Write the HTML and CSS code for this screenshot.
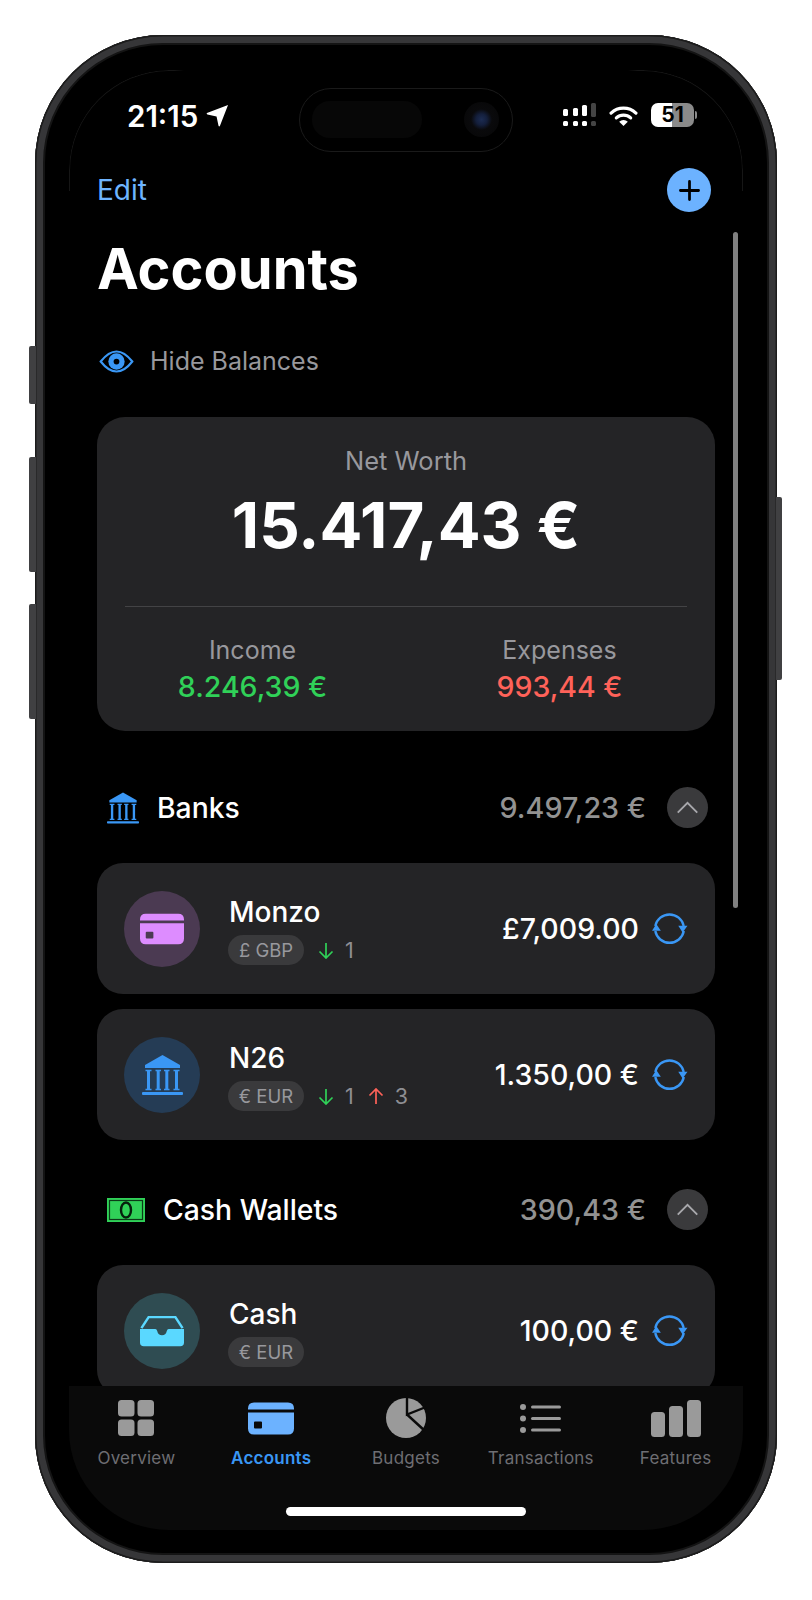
FILE: index.html
```html
<!DOCTYPE html>
<html lang="en">

<head>
  <meta charset="UTF-8">
  <meta name="viewport" content="width=device-width, initial-scale=1.0">
  <title>Accounts</title>
  <link rel="stylesheet" href="styles.css">
</head>

<body>
  <svg class="icon-defs" width="0" height="0">
    <defs>
      <symbol id="bank" viewBox="0 0 41 40">
        <path d="M20.500 0 L38 10 V13 H3 V10 Z" fill="currentColor" />
        <path d="M3.500 15.500 H9.500 M13.500 15.500 H19 M22 15.500 H27.500 M31.500 15.500 H37.500 M3.500 34.500 H9.500 M13.500 34.500 H19 M22 34.500 H27.500 M31.500 34.500 H37.500" stroke="currentColor" stroke-width="1.600" />
        <path d="M6.500 15.500 V34.500 M16.200 15.500 V34.500 M24.800 15.500 V34.500 M34.500 15.500 V34.500" stroke="currentColor" stroke-width="3" />
        <rect x="0" y="37" width="41" height="3" rx="1" fill="currentColor" />
      </symbol>
      <symbol id="sync" viewBox="0 0 36 32">
        <path d="M3.300 13 A14.500 14.500 0 0 1 31.700 13 M31.800 18 A14.500 14.500 0 0 1 3.300 18" fill="none" stroke="currentColor" stroke-width="2.400" />
        <path d="M26.300 12.700 H35.500 L30.600 19.500 Z" fill="currentColor" />
        <path d="M0 17.700 H8.800 L4.300 11 Z" fill="currentColor" />
      </symbol>
      <symbol id="card" viewBox="0 0 46 32">
        <path d="M0 6 Q0 0 6 0 H40 Q46 0 46 6 V7 H0 Z" fill="currentColor" />
        <path d="M0 10 H46 V26 Q46 32 40 32 H6 Q0 32 0 26 Z M7 19 Q6 19 6 20 V25 Q6 26 7 26 H13 Q14 26 14 25 V20 Q14 19 13 19 Z" fill="currentColor" fill-rule="evenodd" />
      </symbol>
      <symbol id="chevron" viewBox="0 0 24 14">
        <path d="M1.500 12.500 L12 2 L22.500 12.500" fill="none" stroke="currentColor" stroke-width="2" />
      </symbol>
      <symbol id="arrow-down" viewBox="0 0 16 17">
        <path d="M8 1 V16 M1.500 9.500 L8 16 L14.500 9.500" fill="none" stroke="currentColor" stroke-width="1.700" />
      </symbol>
      <symbol id="arrow-up" viewBox="0 0 16 17">
        <path d="M8 16 V1 M1.500 7.500 L8 1 L14.500 7.500" fill="none" stroke="currentColor" stroke-width="1.700" />
      </symbol>
    </defs>
  </svg>

  <div class="phone">
    <div class="side-button side-mute"></div>
    <div class="side-button side-up"></div>
    <div class="side-button side-down"></div>
    <div class="side-button side-power"></div>

    <div class="screen">
      <div class="status-bar">
        <div class="status-left">
          <span class="status-time">21:15</span>
          <svg class="status-location" viewBox="0 0 24 24">
            <path d="M23 1 L14.500 23 Q13.500 24 13 22.500 L11 13 L1.500 11 Q0 10.500 1 9.500 Z" fill="#fff" />
          </svg>
        </div>
        <div class="status-right">
          <svg class="status-signal" viewBox="0 0 33 24">
            <rect x="0" y="6" width="5" height="7" rx="1.500" fill="#fff" />
            <rect x="0" y="18" width="5" height="5" rx="1.500" fill="#fff" />
            <rect x="10" y="5" width="5" height="8" rx="1.500" fill="#fff" />
            <rect x="10" y="18" width="5" height="5" rx="1.500" fill="#fff" />
            <rect x="19" y="2" width="5" height="11" rx="1.500" fill="#fff" />
            <rect x="19" y="18" width="5" height="5" rx="1.500" fill="#fff" />
            <rect x="28" y="0" width="5" height="14" rx="1.500" fill="#444" />
            <rect x="28" y="18" width="5" height="5" rx="1.500" fill="#444" />
          </svg>
          <svg class="status-wifi" viewBox="0 0 30 22">
            <path d="M2 8.500 A19 19 0 0 1 28 8.500" fill="none" stroke="#fff" stroke-width="3.400" stroke-linecap="round" />
            <path d="M7.500 13.500 A11 11 0 0 1 22.500 13.500" fill="none" stroke="#fff" stroke-width="3.400" stroke-linecap="round" />
            <path d="M15 22 L10.500 17.500 A6.500 6.500 0 0 1 19.500 17.500 Z" fill="#fff" />
          </svg>
          <div class="battery">
            <div class="battery-body">
              <span class="battery-text">51</span>
            </div>
            <div class="battery-tip"></div>
          </div>
        </div>
        <div class="island">
          <div class="island-sensor"></div>
          <div class="island-camera"></div>
        </div>
      </div>

      <div class="content">
        <div class="scrollbar"></div>

        <div class="top-row">
          <span class="edit-link">Edit</span>
          <div class="add-button">
            <svg viewBox="0 0 22 22" width="21" height="21">
              <path d="M11 1.500 V20.500 M1.500 11 H20.500" stroke="#000" stroke-width="2.900" stroke-linecap="round" />
            </svg>
          </div>
        </div>

        <h1 class="page-title">Accounts</h1>

        <div class="hide-row">
          <svg class="eye-icon" viewBox="0 0 36 24">
            <path d="M1.500 12 Q18 -9 34.500 12 Q18 33 1.500 12 Z" fill="none" stroke="#3a97f5" stroke-width="2.200" />
            <circle cx="18" cy="12" r="8.500" fill="#3a97f5" />
            <circle cx="18" cy="12" r="3" fill="#000" />
          </svg>
          <span>Hide Balances</span>
        </div>

        <div class="net-card">
          <div class="net-label">Net Worth</div>
          <div class="net-value">15.417,43 €</div>
          <div class="net-divider"></div>
          <div class="net-split">
            <div class="net-col">
              <div class="net-sub">Income</div>
              <div class="net-amount green">8.246,39 €</div>
            </div>
            <div class="net-col">
              <div class="net-sub">Expenses</div>
              <div class="net-amount red">993,44 €</div>
            </div>
          </div>
        </div>

        <div class="group-header">
          <svg class="group-icon-bank"><use href="#bank" /></svg>
          <span class="group-name">Banks</span>
          <span class="group-total">9.497,23 €</span>
          <div class="collapse-button"><svg><use href="#chevron" /></svg></div>
        </div>

        <div class="account-list">
          <div class="account-card">
            <div class="account-avatar avatar-purple"><svg class="avatar-card"><use href="#card" /></svg></div>
            <div class="account-info">
              <div class="account-name">Monzo</div>
              <div class="account-meta">
                <span class="chip">£ GBP</span>
                <span class="count"><svg class="green"><use href="#arrow-down" /></svg>1</span>
              </div>
            </div>
            <span class="account-balance">£7,009.00</span>
            <svg class="sync-icon"><use href="#sync" /></svg>
          </div>

          <div class="account-card">
            <div class="account-avatar avatar-blue"><svg class="avatar-bank"><use href="#bank" /></svg></div>
            <div class="account-info">
              <div class="account-name">N26</div>
              <div class="account-meta">
                <span class="chip">€ EUR</span>
                <span class="count"><svg class="green"><use href="#arrow-down" /></svg>1</span>
                <span class="count"><svg class="red"><use href="#arrow-up" /></svg>3</span>
              </div>
            </div>
            <span class="account-balance">1.350,00 €</span>
            <svg class="sync-icon"><use href="#sync" /></svg>
          </div>
        </div>

        <div class="group-header group-cash">
          <svg class="group-icon-cash" viewBox="0 0 38 24">
            <rect x="0" y="0" width="38" height="24" fill="#30d158" />
            <rect x="2.500" y="2.500" width="33" height="19" fill="none" stroke="#0c3a18" stroke-width="1.200" />
            <ellipse cx="19" cy="12" rx="5" ry="7.500" fill="#30d158" stroke="#06200d" stroke-width="2.400" />
          </svg>
          <span class="group-name">Cash Wallets</span>
          <span class="group-total">390,43 €</span>
          <div class="collapse-button"><svg><use href="#chevron" /></svg></div>
        </div>

        <div class="account-list">
          <div class="account-card">
            <div class="account-avatar avatar-teal">
              <svg class="avatar-card" viewBox="0 0 46 32">
                <path d="M1.500 13 L9 1.500 H37 L44.500 13" fill="none" stroke="#5ad8ff" stroke-width="2.600" />
                <path d="M0 14 H16 Q17.500 14 18 16 Q19 20.500 23 20.500 Q27 20.500 28 16 Q28.500 14 30 14 H46 V28 Q46 32 42 32 H4 Q0 32 0 28 Z" fill="#5ad8ff" />
              </svg>
            </div>
            <div class="account-info">
              <div class="account-name">Cash</div>
              <div class="account-meta">
                <span class="chip">€ EUR</span>
              </div>
            </div>
            <span class="account-balance">100,00 €</span>
            <svg class="sync-icon"><use href="#sync" /></svg>
          </div>
        </div>
      </div>

      <div class="tab-bar">
        <div class="tab-row">
          <div class="tab-item">
            <div class="tab-icon">
              <svg viewBox="0 0 36 36" width="36" height="36">
                <rect x="0" y="0" width="16.500" height="16.500" rx="3.500" fill="currentColor" />
                <rect x="19.500" y="0" width="16.500" height="16.500" rx="3.500" fill="currentColor" />
                <rect x="0" y="19.500" width="16.500" height="16.500" rx="3.500" fill="currentColor" />
                <rect x="19.500" y="19.500" width="16.500" height="16.500" rx="3.500" fill="currentColor" />
              </svg>
            </div>
            <span class="tab-label">Overview</span>
          </div>
          <div class="tab-item active">
            <div class="tab-icon">
              <svg width="46" height="33"><use href="#card" /></svg>
            </div>
            <span class="tab-label">Accounts</span>
          </div>
          <div class="tab-item">
            <div class="tab-icon">
              <svg viewBox="0 0 42 42" width="42" height="42">
                <circle cx="21" cy="21" r="20" fill="currentColor" />
                <path d="M22 0 V17.500 L41 10 M22 17.500 L40 34" fill="none" stroke="#0a0a0a" stroke-width="2.400" />
              </svg>
            </div>
            <span class="tab-label">Budgets</span>
          </div>
          <div class="tab-item">
            <div class="tab-icon">
              <svg viewBox="0 0 41 29" width="41" height="29">
                <circle cx="3" cy="3" r="3" fill="currentColor" />
                <circle cx="3" cy="14.500" r="3" fill="currentColor" />
                <circle cx="3" cy="26" r="3" fill="currentColor" />
                <rect x="11" y="1.500" width="30" height="3" rx="1.500" fill="currentColor" />
                <rect x="11" y="13" width="30" height="3" rx="1.500" fill="currentColor" />
                <rect x="11" y="24.500" width="30" height="3" rx="1.500" fill="currentColor" />
              </svg>
            </div>
            <span class="tab-label">Transactions</span>
          </div>
          <div class="tab-item">
            <div class="tab-icon">
              <svg viewBox="0 0 50 37" width="50" height="37">
                <rect x="0" y="12" width="14" height="25" rx="3.500" fill="currentColor" />
                <rect x="18" y="6" width="14" height="31" rx="3.500" fill="currentColor" />
                <rect x="36" y="0" width="14" height="37" rx="3.500" fill="currentColor" />
              </svg>
            </div>
            <span class="tab-label">Features</span>
          </div>
        </div>
        <div class="home-indicator"></div>
      </div>
    </div>
  </div>
</body>

</html>
```

FILE: styles.css
```css
* {
  box-sizing: border-box;
}

body {
  margin: 0;
  background-color: #fff;
  font-family: 'Inter', 'Liberation Sans', sans-serif;
  color: #fff;
  padding: 35px 35px 37px;
}

.icon-defs {
  position: absolute;
}

.green {
  color: #30d158;
}

.red {
  color: #ff6259;
}

/* device frame */
.phone {
  position: relative;
  width: 742px;
  height: 1528px;
  padding: 35px 34px 33px;
  background-color: #000;
  border-radius: 128px;
  box-shadow: inset 0 0 0 1.500px #1c1c1c, inset 0 0 0 8px #363638, inset 0 0 0 10px #141414;
}

.side-button {
  position: absolute;
  width: 7px;
  left: -6px;
  background-color: #404042;
  border-radius: 2px 0 0 2px;
}

.side-mute {
  top: 311px;
  height: 58px;
}

.side-up {
  top: 422px;
  height: 115px;
}

.side-down {
  top: 569px;
  height: 115px;
}

.side-power {
  left: auto;
  right: -5px;
  top: 462px;
  width: 6px;
  height: 183px;
  border-radius: 0 2px 2px 0;
}

.screen {
  position: relative;
  display: flex;
  flex-direction: column;
  height: 1460px;
  background-color: #000;
  border-radius: 100px;
  overflow: hidden;
}

/* faint screen edge, only seen around the top corners */
.screen::before {
  content: '';
  position: absolute;
  left: 0;
  right: 0;
  top: 0;
  height: 120px;
  border: 1px solid #161616;
  border-bottom: none;
  border-radius: 100px 100px 0 0;
  mask-image: linear-gradient(90deg, #000 105px, transparent 115px, transparent 559px, #000 569px);
}

/* status bar */
.status-bar {
  position: relative;
  flex-shrink: 0;
  display: flex;
  justify-content: space-between;
  align-items: center;
  height: 90px;
  padding: 0 46px 0 58px;
}

.status-left {
  display: flex;
  align-items: center;
  gap: 8px;
}

.status-time {
  padding-top: 2px;
  font-size: 29.500px;
  font-weight: 600;
}

.status-location {
  width: 23px;
  height: 23px;
}

.status-right {
  display: flex;
  align-items: center;
  gap: 13px;
}

.status-signal {
  width: 33px;
  height: 24px;
}

.status-wifi {
  width: 29px;
  height: 21px;
}

.battery {
  display: flex;
  align-items: center;
  gap: 1px;
}

.battery-body {
  width: 43px;
  height: 24px;
  background: linear-gradient(90deg, #fff 50%, #8a8a8a 50%);
  border-radius: 7px;
  text-align: center;
}

.battery-text {
  color: #000;
  font-size: 21px;
  font-weight: 700;
  line-height: 24px;
}

.battery-tip {
  width: 2px;
  height: 8px;
  background-color: #8a8a8a;
  border-radius: 0 2px 2px 0;
}

.island {
  position: absolute;
  left: 230px;
  top: 18px;
  width: 214px;
  height: 64px;
  border: 1px solid #1a1a1a;
  border-radius: 32px;
}

.island-sensor {
  position: absolute;
  left: 12px;
  top: 12px;
  width: 110px;
  height: 37px;
  background-color: #070707;
  border-radius: 18px;
}

.island-camera {
  position: absolute;
  left: 164px;
  top: 13px;
  width: 35px;
  height: 35px;
  border-radius: 50%;
  background: radial-gradient(circle, #1c2c52 0, #141f3c 22%, #0a0a0c 42%, #060606 100%);
}

/* scroll area */
.content {
  position: relative;
  flex: 1;
  min-height: 0;
  overflow: hidden;
  padding: 0 28px;
}

.scrollbar {
  position: absolute;
  right: 5px;
  top: 72px;
  width: 5px;
  height: 676px;
  background-color: #808080;
  border-radius: 3px;
}

.top-row {
  display: flex;
  justify-content: space-between;
  align-items: center;
  height: 44px;
  margin-top: 8px;
  padding-right: 4px;
}

.edit-link {
  font-size: 28px;
  color: #6eb4ff;
}

.add-button {
  display: flex;
  align-items: center;
  justify-content: center;
  width: 44px;
  height: 44px;
  background-color: #6cb2ff;
  border-radius: 50%;
}

.page-title {
  margin: 24px 0 0;
  font-size: 56px;
  font-weight: 700;
  line-height: 66px;
}

.hide-row {
  display: flex;
  align-items: center;
  gap: 16px;
  height: 32px;
  margin-top: 43px;
  padding-left: 2px;
  font-size: 25px;
  color: #98989d;
}

.eye-icon {
  width: 35px;
  height: 23px;
}

/* net worth card */
.net-card {
  margin-top: 40px;
  padding: 28px 28px 0;
  height: 314px;
  background-color: #242426;
  border-radius: 28px;
  text-align: center;
}

.net-label {
  font-size: 25.500px;
  line-height: 32px;
  color: #98989d;
}

.net-value {
  margin-top: 11px;
  font-size: 63.500px;
  font-weight: 700;
  line-height: 74px;
}

.net-divider {
  height: 1px;
  margin-top: 44px;
  background-color: #434345;
}

.net-split {
  display: flex;
  justify-content: center;
  margin: 27px -26px 0;
}

.net-col {
  flex: 0 0 307px;
}

.net-sub {
  font-size: 25px;
  line-height: 32px;
  color: #98989d;
}

.net-amount {
  margin-top: 4px;
  font-size: 28.500px;
  font-weight: 550;
  line-height: 34px;
}

/* account groups */
.group-header {
  display: flex;
  align-items: center;
  height: 43px;
  margin-top: 55px;
  padding: 0 7px 0 10px;
}

.group-cash {
  margin-top: 48px;
}

.group-icon-bank {
  width: 32px;
  height: 32px;
  color: #3a97f5;
}

.group-icon-cash {
  width: 38px;
  height: 24px;
}

.group-name {
  margin-left: 18px;
  font-size: 28.300px;
  font-weight: 550;
}

.group-total {
  margin-left: auto;
  margin-right: 21px;
  font-size: 28.700px;
  font-weight: 550;
  color: #929292;
}

.collapse-button {
  display: flex;
  align-items: center;
  justify-content: center;
  width: 41px;
  height: 41px;
  background-color: #3a3a3c;
  border-radius: 50%;
  color: #a8a8ac;
}

.collapse-button svg {
  width: 23px;
  height: 13px;
}

.account-list {
  display: flex;
  flex-direction: column;
  gap: 15px;
  margin-top: 34px;
}

.account-card {
  display: flex;
  align-items: center;
  flex-shrink: 0;
  height: 131px;
  padding: 0 27px;
  background-color: #242426;
  border-radius: 26px;
}

.account-avatar {
  display: flex;
  align-items: center;
  justify-content: center;
  flex-shrink: 0;
  width: 76px;
  height: 76px;
  border-radius: 50%;
}

.avatar-purple {
  background-color: #4b3a52;
  color: #dd8cff;
}

.avatar-blue {
  background-color: #253c55;
  color: #3a97f5;
}

.avatar-teal {
  background-color: #2f4c52;
}

.avatar-card {
  width: 44px;
  height: 32px;
}

.avatar-bank {
  width: 41px;
  height: 40px;
}

.account-info {
  margin-left: 29px;
  padding-top: 3px;
}

.account-name {
  font-size: 28px;
  font-weight: 500;
  line-height: 34px;
}

.account-meta {
  display: flex;
  align-items: center;
  gap: 14px;
  margin-top: 6px;
  margin-left: -1px;
}

.chip {
  display: inline-block;
  width: 76px;
  height: 30px;
  background-color: #3a3a3c;
  border-radius: 15px;
  text-align: center;
  font-size: 18.500px;
  line-height: 30px;
  color: #98989d;
}

.count {
  display: flex;
  align-items: center;
  gap: 11px;
  font-size: 21.500px;
  color: #8e8e93;
}

.count svg {
  width: 16px;
  height: 17px;
}

.account-balance {
  margin-left: auto;
  margin-right: 13px;
  font-size: 28.500px;
  font-weight: 550;
}

.sync-icon {
  width: 36px;
  height: 32px;
  color: #3a97f5;
}

/* tab bar */
.tab-bar {
  flex-shrink: 0;
  display: flex;
  flex-direction: column;
  height: 144px;
  padding-top: 12px;
  background-color: #0a0a0a;
}

.tab-row {
  display: grid;
  grid-template-columns: repeat(5, 1fr);
}

.tab-item {
  display: flex;
  flex-direction: column;
  align-items: center;
  color: #9a9a9a;
}

.tab-icon {
  display: flex;
  align-items: center;
  justify-content: center;
  height: 40px;
}

.tab-label {
  margin-top: 8px;
  font-size: 17px;
  letter-spacing: 0.25px;
  line-height: 24px;
  color: #6e6e73;
  white-space: nowrap;
}

.tab-item.active {
  color: #6cb2ff;
}

.tab-item.active .tab-label {
  color: #3a97f5;
  font-weight: 600;
}

.home-indicator {
  width: 240px;
  height: 9px;
  margin: 37px auto 0;
  background-color: #fff;
  border-radius: 5px;
}
```
